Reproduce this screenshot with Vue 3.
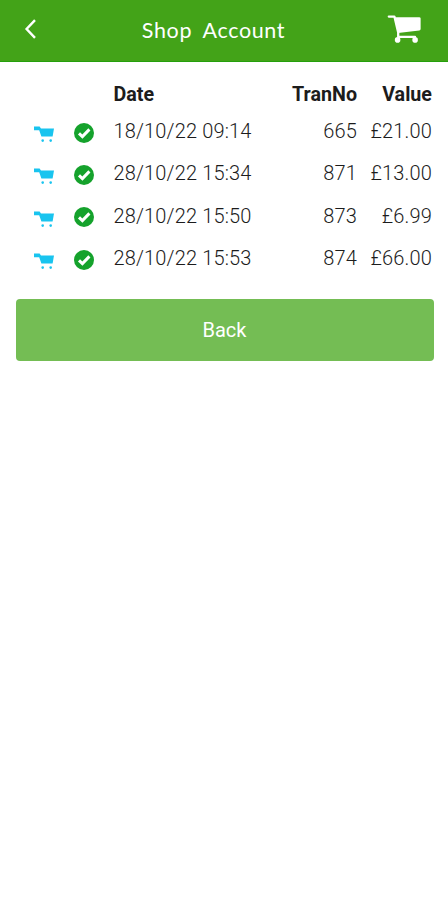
<script setup>
const transactions = [
    { date: "18/10/22 09:14", number: 665, value: "£21.00" },
    { date: "28/10/22 15:34", number: 871, value: "£13.00" },
    { date: "28/10/22 15:50", number: 873, value: "£6.99" },
    { date: "28/10/22 15:53", number: 874, value: "£66.00" },
];
</script>

<template>
    <main class="shop-account">
        <header class="top-bar">
            <button class="icon-button" aria-label="Back">
                <svg class="chevron" viewBox="0 0 12 20">
                    <path d="M11 1.2 2.6 10l8.4 8.8" />
                </svg>
            </button>
            <h1 class="title">Shop Account</h1>
            <button class="icon-button" aria-label="Cart">
                <svg class="header-cart" viewBox="0 0 34 28">
                    <path
                        class="cart-frame"
                        d="M1.8 1.6H7.4L11.2 17.5V21.8H28"
                    />
                    <path
                        class="cart-basket"
                        d="M8 2.2H32.2Q33.6 2.2 33.6 3.6V14Q33.6 15.2 32.3 15.4L11 18Z"
                    />
                    <circle cx="10.6" cy="24.9" r="2.8" />
                    <circle cx="28.1" cy="24.9" r="2.8" />
                </svg>
            </button>
        </header>
        <section class="transactions">
            <div class="table-row table-header">
                <div></div>
                <div></div>
                <div>Date</div>
                <div class="number">TranNo</div>
                <div class="number">Value</div>
            </div>
            <div
                class="table-row"
                v-for="transaction in transactions"
                :key="transaction.number"
            >
                <svg class="row-cart" viewBox="0 0 20 16">
                    <path
                        d="M0 .4H5.6L7 2.6H20L18.6 10.4H7.4L5.2 4.2H0Z"
                    />
                    <circle cx="8.7" cy="14.6" r="1.3" />
                    <circle cx="16.7" cy="14.6" r="1.3" />
                </svg>
                <svg class="row-check" viewBox="0 0 20 20">
                    <circle cx="10" cy="10" r="10" />
                    <path d="m5 10.4 3.4 3.2 7-7.2" />
                </svg>
                <div>{{ transaction.date }}</div>
                <div class="number">{{ transaction.number }}</div>
                <div class="number">{{ transaction.value }}</div>
            </div>
        </section>
        <button class="back-button">Back</button>
    </main>
</template>

<style>
body {
    margin: 0;
    background: #fff;
}
</style>

<style scoped>
.shop-account {
    min-height: 900px;
    background: #fff;
    color: #1c1c1c;
    font-family: Roboto, sans-serif;
    font-size: 20px;
}

.top-bar {
    display: flex;
    align-items: center;
    justify-content: space-between;
    box-sizing: border-box;
    height: 62px;
    padding: 0 27px 4px 24px;
    background: #43a318;
    border-bottom: 1px solid #25a00c;
}

.icon-button {
    display: flex;
    padding: 0;
    border: 0;
    background: none;
}

.chevron {
    width: 12px;
    height: 20px;
    fill: none;
    stroke: #fff;
    stroke-width: 2.4;
}

.header-cart {
    width: 34px;
    height: 28px;
    fill: #fff;
}

.cart-frame {
    fill: none;
    stroke: #fff;
    stroke-width: 2.3;
    stroke-linecap: round;
    stroke-linejoin: round;
}

.title {
    margin: 3px 0 0 4px;
    color: #fff;
    font-family: Lato, sans-serif;
    font-size: 21.5px;
    font-weight: 400;
    letter-spacing: 0.65px;
    word-spacing: 5px;
}

.transactions {
    padding: 15.5px 16px 0 33.5px;
}

.table-row {
    display: grid;
    grid-template-columns: 40px 40px 1fr 80px 75px;
    align-items: center;
    height: 42.3px;
    font-weight: 300;
    letter-spacing: 0.15px;
}

.table-header {
    box-sizing: border-box;
    height: 32.5px;
    padding-top: 1px;
    font-weight: 700;
    font-size: 19.7px;
    letter-spacing: 0;
}

.number {
    text-align: right;
}

.row-cart {
    width: 20px;
    height: 16px;
    margin-top: 6px;
    fill: #19c4ef;
}

.row-check {
    width: 20px;
    height: 20px;
    margin-top: 3px;
    fill: #15a22c;
}

.row-check path {
    fill: none;
    stroke: #fff;
    stroke-width: 3;
}

.back-button {
    display: block;
    width: 418px;
    height: 62px;
    margin: 20px 0 0 15.5px;
    padding: 0;
    border: 0;
    border-radius: 4px;
    background: #74bd54;
    color: #fff;
    font: 20px Roboto, sans-serif;
}
</style>
